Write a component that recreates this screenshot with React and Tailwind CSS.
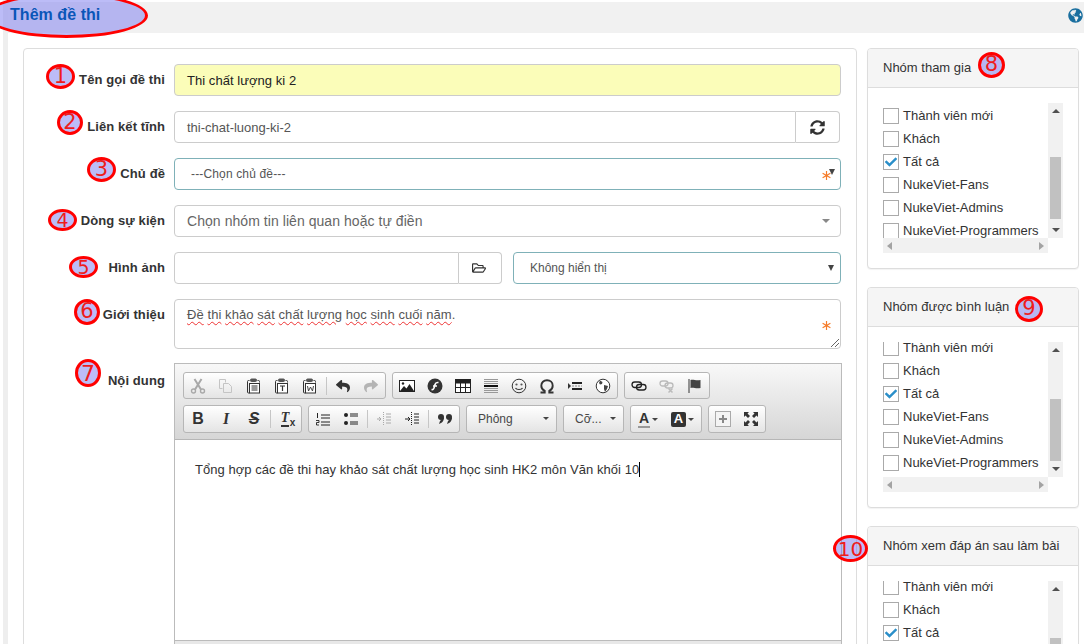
import React from "react";
import { FaSyncAlt, FaRegFolderOpen, FaGlobeAmericas, FaCheck, FaReply, FaShare } from "react-icons/fa";

const S = ({ children, c = "#333" }) => (
  <svg width="16" height="16" viewBox="0 0 16 16" fill="none" stroke={c} strokeWidth="1">{children}</svg>
);
const Clip = ({ children }) => (
  <S c="#333">
    <path d="M3.500 2.500H2.500a1 1 0 0 0-1 1v10.500a1 1 0 0 0 1 1h1M11.500 2.500h1a1 1 0 0 1 1 1v1" />
    <rect x="4.500" y="1" width="6" height="2.500" rx="1" fill="#555" stroke="#555" />
    <rect x="3.500" y="5.500" width="10" height="9.500" fill="#fff" />
    {children}
  </S>
);
const icons = {
  cut: (
    <S c="#a8a8a8"><circle cx="3.500" cy="13" r="2" strokeWidth="1.400" /><circle cx="12.500" cy="13" r="2" strokeWidth="1.400" /><path d="M5 11.500 11.500 1M11 11.500 4.500 1" strokeWidth="2" /></S>
  ),
  copy: (
    <S c="#c4c4c4"><path d="M1.500 1.500h6v3M1.500 1.500v9h3M5.500 5.500h5l3 3v6h-8z" /></S>
  ),
  paste: <Clip><path d="M5.500 8h6M5.500 10h6M5.500 12h6" /></Clip>,
  pasteT: <Clip><path d="M6 8h5M8.500 8v5" strokeWidth="1.200" /></Clip>,
  pasteW: <Clip><path d="M5.500 8l1 5 2-4 2 4 1-5" strokeWidth="0.900" /></Clip>,
  undo: <FaReply size={14} color="#333" />,
  redo: <FaShare size={14} color="#b4b4b4" />,
  image: (
    <S c="#222"><rect x="0.500" y="2.500" width="15" height="11" fill="#fff" /><path d="M1 13l4-5 2.500 2.500L10.500 6 15 13z" fill="#222" stroke="none" /><circle cx="4" cy="5.500" r="1.200" fill="#222" stroke="none" /></S>
  ),
  flash: (
    <svg width="16" height="16" viewBox="0 0 16 16"><circle cx="8" cy="8" r="7.500" fill="#333" /><path d="M4.500 11.500c2 .5 2.500-1 3-3l.5-2c.4-1.500 1.500-2.300 3.500-2M6 8h4" stroke="#fff" strokeWidth="1.600" fill="none" /></svg>
  ),
  table: (
    <S c="#222"><rect x="0.500" y="1.500" width="15" height="13" fill="#fff" /><rect x="0.500" y="1.500" width="15" height="3.500" fill="#222" /><path d="M5.500 5v9M10.500 5v9M1 9.500h14" /></S>
  ),
  hr: (
    <S c="#999"><path d="M1 1.500h14M1 3.500h14M1 5.500h14M1 10.500h14M1 12.500h14M1 14.500h14" /><path d="M1 8h14" stroke="#111" strokeWidth="2" /></S>
  ),
  smile: (
    <S c="#333"><circle cx="8" cy="8" r="6.800" /><circle cx="5.500" cy="6.500" r="1.100" fill="#555" stroke="none" /><circle cx="10.500" cy="6.500" r="1.100" fill="#555" stroke="none" /><path d="M4.500 10c1 2 6 2 7 0" strokeWidth="1.200" /></S>
  ),
  omega: (
    <S c="#333"><path d="M1.500 14.500h4.200v-1.600C3.700 11.900 2.300 10 2.300 7.700 2.300 4.400 4.700 2.300 8 2.300s5.700 2.100 5.700 5.400c0 2.300-1.400 4.200-3.400 5.200v1.600h4.200" strokeWidth="1.900" /></S>
  ),
  iframe: (
    <svg width="16" height="16" viewBox="0 0 16 16"><path d="M1 5v6l3-3z" fill="#333" /><path d="M5 4h10v2H5zM5 10h10v2H5z" fill="#222" /><path d="M5 8h10" stroke="#888" strokeDasharray="2 1" /></svg>
  ),
  globe: (
    <S c="#333"><circle cx="8" cy="8" r="6.800" fill="#fff" /><path d="M5 2.500 7.500 4 7 6 5 6.500 4 5zM9 7l4 1-1 3-2 3-1-3z" fill="#444" stroke="none" /></S>
  ),
  link: (
    <S c="#222"><rect x="1" y="4" width="9.500" height="5.500" rx="2.700" strokeWidth="1.300" /><rect x="5.500" y="6.500" width="9.500" height="5.500" rx="2.700" strokeWidth="1.300" /></S>
  ),
  unlink: (
    <S c="#bbb"><rect x="1" y="3" width="8" height="5" rx="2.500" strokeWidth="1.300" /><rect x="6" y="5" width="8" height="5" rx="2.500" strokeWidth="1.300" /><path d="M9.500 10.500l4 4M13.500 10.500l-4 4" strokeWidth="1.500" /></S>
  ),
  flag: (
    <svg width="16" height="16" viewBox="0 0 16 16"><path d="M2 1v14" stroke="#333" /><path d="M3.500 2c3-1 5 1 10 0v8c-5 1-7-1-10 0z" fill="#444" /></svg>
  ),
  ol: (
    <S c="#222"><path d="M6 4h9M6 7h9M6 11h9M6 14h9" strokeWidth="1" /><path d="M2.500 2v5" /><path d="M1 9.500h3v2H1.500v2.500H4" strokeWidth="0.900" /></S>
  ),
  ul: (
    <svg width="16" height="16" viewBox="0 0 16 16"><circle cx="3" cy="4" r="2" fill="#222" /><circle cx="3" cy="12" r="2" fill="#222" /><path d="M7 3h8M7 5h8M7 11h8M7 13h8" stroke="#222" /></svg>
  ),
  outdent: (
    <S c="#aaa"><path d="M7.500 1v14" strokeDasharray="1 1" /><path d="M10 3h5M10 6h5M10 9h5M10 12h5" /><path d="M1 8h4M3 6l2 2-2 2" /></S>
  ),
  indent: (
    <S c="#222"><path d="M7.500 1v14" strokeDasharray="1 1" /><path d="M10 3h5M10 6h5M10 9h5M10 12h5" /><path d="M1 8h5M4 6l2 2-2 2" /></S>
  ),
  quote: (
    <svg width="16" height="16" viewBox="0 0 16 16" fill="#333"><circle cx="4" cy="6" r="3" /><circle cx="12" cy="6" r="3" /><path d="M7 6c0 4-2 6-5 7l1-3zM15 6c0 4-2 6-5 7l1-3z" /></svg>
  ),
  blocks: (
    <svg width="16" height="16" viewBox="0 0 16 16"><rect x="0.500" y="0.500" width="15" height="15" fill="#f4f4f4" stroke="#aaa" /><path d="M8 4v8M4 8h8" stroke="#888" strokeWidth="2" /></svg>
  ),
  max: (
    <svg width="16" height="16" viewBox="0 0 16 16" fill="#333"><path d="M1 1h5L4.500 2.500 7 5 5 7 2.500 4.500 1 6zM15 1v5l-1.500-1.500L11 7 9 5l2.500-2.500L10 1zM1 15v-5l1.500 1.500L5 9l2 2-2.500 2.500L6 15zM15 15h-5l1.500-1.500L9 11l2-2 2.500 2.500L15 10z" /></svg>
  ),
};

const Btn = ({ name, children }) => (
  <span className="flex h-full w-[28px] items-center justify-center">{children || icons[name]}</span>
);
const Sep = () => (
  <span className="flex h-full w-[5px] items-center justify-center"><span className="h-[18px] w-px bg-[#c6c6c6]" /></span>
);
const Grp = ({ children, cls = "" }) => (
  <div className={"flex h-full items-center rounded-[3px] border border-[#b6b6b6] bg-gradient-to-b from-white to-[#e4e4e4] " + cls}>{children}</div>
);
const Caret = () => <span className="border-x-[3px] border-t-[3px] border-x-transparent border-t-[#444]" />;
const Combo = ({ label, cls }) => (
  <div className={"flex h-full items-center justify-between rounded-[3px] border border-[#b6b6b6] bg-gradient-to-b from-white to-[#e4e4e4] pr-[7px] pb-[1px] pl-[11px] text-[12px] text-[#484848] " + cls}>
    <span>{label}</span>
    <Caret />
  </div>
);

const Toolbar = () => (
  <div className="flex h-[76px] flex-col gap-[6px] border-b border-[#b6b6b6] bg-gradient-to-b from-[#f8f8f8] to-[#d6d6d6] px-[8px] pt-[8px]">
    <div className="flex h-[27px] gap-[6px]">
      <Grp>
        <Btn name="cut" /><Btn name="copy" /><Btn name="paste" /><Btn name="pasteT" /><Btn name="pasteW" /><Sep /><Btn name="undo" /><Btn name="redo" />
      </Grp>
      <Grp>
        <Btn name="image" /><Btn name="flash" /><Btn name="table" /><Btn name="hr" /><Btn name="smile" /><Btn name="omega" /><Btn name="iframe" /><Btn name="globe" />
      </Grp>
      <Grp>
        <Btn name="link" /><Btn name="unlink" /><Btn name="flag" />
      </Grp>
    </div>
    <div className="flex h-[28px] gap-[6px]">
      <Grp>
        <Btn><b className="font-['Liberation_Sans'] text-[16px] text-[#333]">B</b></Btn>
        <Btn><b className="font-['Liberation_Serif'] text-[16px] italic text-[#333]">I</b></Btn>
        <Btn><b className="font-['Liberation_Sans'] text-[16px] text-[#333] italic line-through">S</b></Btn>
        <Sep />
        <Btn>
          <span className="relative mr-[4px] border-b-2 border-[#333] font-['Liberation_Serif'] text-[14px] leading-[14px] font-bold text-[#333] italic">
            T
            <span className="absolute top-[5px] left-[9px] font-['Liberation_Sans'] text-[10px] not-italic">x</span>
          </span>
        </Btn>
      </Grp>
      <Grp>
        <Btn name="ol" /><Btn name="ul" /><Sep /><Btn name="outdent" /><Btn name="indent" /><Sep /><Btn name="quote" />
      </Grp>
      <Combo label="Phông" cls="w-[91px]" />
      <Combo label="Cỡ..." cls="w-[61px]" />
      <Grp cls="w-[72px] px-[7px] justify-between">
        <span className="flex items-center gap-[2px]">
          <span className="border-b-[2px] border-[#999] px-[1px] font-['Liberation_Sans'] text-[14px] leading-[15px] font-bold text-[#333]">A</span>
          <Caret />
        </span>
        <span className="flex items-center gap-[2px]">
          <span className="flex h-[15px] w-[15px] items-center justify-center rounded-[2px] bg-[#333] font-['Liberation_Sans'] text-[13px] font-bold text-white">A</span>
          <Caret />
        </span>
      </Grp>
      <Grp>
        <Btn name="blocks" /><Btn name="max" />
      </Grp>
    </div>
  </div>
);

const Label = ({ children }) => (
  <label className="w-[141px] shrink-0 pt-[7px] text-right text-[13px] leading-[18px] font-bold tracking-[0.1px] text-[#333]">{children}</label>
);
const Row = ({ label, children }) => (
  <div className="flex gap-[9px]">
    <Label>{label}</Label>
    <div className="min-w-0 flex-1">{children}</div>
  </div>
);
const Star = ({ cls }) => (
  <svg width="9" height="9" viewBox="0 0 9 9" stroke="#f57c2a" strokeWidth="1.200" className={"absolute " + cls}>
    <path d="M4.500 0v9M0.600 2.200l7.800 4.600M8.400 2.200 0.600 6.800" />
  </svg>
);
const Arrow = () => <span className="border-x-[3.500px] border-t-[6px] border-x-transparent border-t-[#444]" />;

const Check = ({ on, label }) => (
  <div className="flex h-[23px] shrink-0 items-center gap-[4px] text-[13px] whitespace-nowrap text-[#333]">
    <span className="flex h-[16px] w-[16px] shrink-0 items-center justify-center border border-[#aaa] bg-white">
      {on && <FaCheck size={12} color="#2b8fc9" />}
    </span>
    <span>{label}</span>
  </div>
);

const Side = ({ title, off, thumb }) => (
  <div className="overflow-hidden rounded-[4px] border border-[#ddd] bg-white shadow-[0_1px_1px_rgba(0,0,0,0.05)]">
    <div className="flex h-[39px] items-center border-b border-[#ddd] bg-[#f5f5f5] px-[15px] text-[13px] text-[#333]">{title}</div>
    <div className="h-[180px] px-[15px] pt-[15px]">
      <div className="flex h-[150px]">
        <div className="flex w-[165px] flex-col">
          <div className="h-[135px] overflow-hidden">
            <div className={"flex flex-col " + off}>
              <Check label="Thành viên mới" />
              <Check label="Khách" />
              <Check on label="Tất cả" />
              <Check label="NukeViet-Fans" />
              <Check label="NukeViet-Admins" />
              <Check label="NukeViet-Programmers" />
            </div>
          </div>
          <div className="flex h-[15px] items-center justify-between bg-[#f1f1f1] px-[4px]">
            <span className="border-y-[4px] border-r-[5px] border-y-transparent border-r-[#a3a3a3]" />
            <span className="border-y-[4px] border-l-[5px] border-y-transparent border-l-[#a3a3a3]" />
          </div>
        </div>
        <div className="flex h-[135px] w-[15px] flex-col items-center bg-[#f1f1f1]">
          <span className="mt-[6px] mb-[-10px] border-x-[4px] border-b-[4px] border-x-transparent border-b-[#505050]" />
          <div className={"h-[62px] w-[11px] shrink-0 bg-[#c1c1c1] " + thumb} />
          <span className="mt-auto mb-[6px] border-x-[4px] border-t-[4px] border-x-transparent border-t-[#505050]" />
        </div>
      </div>
    </div>
  </div>
);

const Mark = ({ n, cls }) => (
  <div className={"absolute flex items-center justify-center rounded-[50%] border-[3px] border-[#f00] bg-[#7a7af0]/50 font-['DejaVu_Sans'] text-[#ee1c1c] " + cls}>{n}</div>
);

const Wavy = ({ children }) => (
  <span className="underline decoration-[#e33] decoration-wavy decoration-[1px] underline-offset-2">{children}</span>
);

const intro = ["Đề", "thi", "khảo", "sát", "chất", "lượng", "học", "sinh", "cuối", "năm"];

export default function App() {
  return (
    <div className="relative h-[644px] overflow-hidden bg-white pl-[3px] font-['Liberation_Sans',sans-serif] text-[13px]">
      <div className="h-full border-l-[5px] border-[#eee] pt-[2px]">
        <div className="flex h-[31px] items-center justify-between bg-[#f1f1f1] pb-[5px] pl-[2px]">
          <h1 className="relative z-10 text-[16px] font-bold tracking-[0.05px] text-[#0a56b8]">Thêm đề thi</h1>
          <FaGlobeAmericas size={15} color="#1a6f9f" className="mr-[1px]" />
        </div>
        <div className="flex gap-[10px] pt-[15px] pl-[15px]">
          <div className="h-[700px] w-[834px] shrink-0 rounded-[4px] border border-[#ddd] bg-white pt-[15px] pr-[15px]">
            <div className="flex flex-col gap-[15px]">
              <Row label="Tên gọi đề thi">
                <div className="flex h-[32px] items-center rounded-[4px] border border-[#ccc] bg-[#fbfdb9] px-[12px] pt-[1px] tracking-[0.05px] text-[#222]">Thi chất lượng ki 2</div>
              </Row>
              <Row label="Liên kết tĩnh">
                <div className="flex h-[32px] w-[666px]">
                  <div className="flex flex-1 items-center rounded-l-[4px] border border-[#ccc] px-[12px] pt-[1px] text-[#555]">thi-chat-luong-ki-2</div>
                  <div className="flex w-[44px] items-center justify-center rounded-r-[4px] border border-l-0 border-[#ccc]">
                    <FaSyncAlt size={15} color="#333" />
                  </div>
                </div>
              </Row>
              <Row label="Chủ đề">
                <div className="relative flex h-[32px] items-center rounded-[4px] border border-[#7fb1b8] pr-[5px] pl-[16px] text-[12px] tracking-[0.15px] text-[#555]">
                  <span className="flex-1">---Chọn chủ đề---</span>
                  <Star cls="top-[12px] right-[9px]" />
                  <span className="mb-[4px] border-x-[3.500px] border-t-[6px] border-x-transparent border-t-[#444]" />
                </div>
              </Row>
              <Row label="Dòng sự kiện">
                <div className="flex h-[32px] items-center justify-between rounded-[4px] border border-[#ccc] pt-[1px] pr-[10px] pl-[12px] text-[14px] tracking-[0.055px] text-[#666]">
                  <span>Chọn nhóm tin liên quan hoặc tự điền</span>
                  <span className="mb-[1px] border-x-[4px] border-t-[4px] border-x-transparent border-t-[#888]" />
                </div>
              </Row>
              <Row label="Hình ảnh">
                <div className="flex h-[32px] gap-[11px]">
                  <div className="flex w-[328px]">
                    <div className="flex-1 rounded-l-[4px] border border-[#ccc]" />
                    <div className="flex w-[43px] items-center justify-center rounded-r-[4px] border border-l-0 border-[#ccc]">
                      <FaRegFolderOpen size={14} color="#333" className="mr-[3px]" />
                    </div>
                  </div>
                  <div className="flex flex-1 items-center justify-between rounded-[4px] border border-[#7fb1b8] pr-[6px] pl-[16px] text-[12px] text-[#555]">
                    <span>Không hiển thị</span>
                    <Arrow />
                  </div>
                </div>
              </Row>
              <Row label="Giới thiệu">
                <div className="relative h-[50px] rounded-[4px] border border-[#ccc] px-[12px] pt-[5px] tracking-[0.07px] text-[#555]">
                  {intro.map((w, i) => (
                    <React.Fragment key={w}>
                      {i > 0 && " "}
                      <Wavy>{w}</Wavy>
                    </React.Fragment>
                  ))}
                  .
                  <Star cls="top-[21px] right-[9px]" />
                  <svg width="10" height="10" viewBox="0 0 10 10" className="absolute right-0 bottom-0" stroke="#666" fill="none">
                    <path d="M1 9 9 1M5 9l4-4" />
                  </svg>
                </div>
              </Row>
              <div className="-mt-[1px]">
                <Row label={<span className="relative top-[2px]">Nội dung</span>}>
                  <div className="w-[668px] border border-[#bbb]">
                    <Toolbar />
                    <div className="h-[200px] px-[20px] pt-[19px] text-[13px] leading-[20px] tracking-[0.04px] text-[#333]">
                      Tổng hợp các đề thi hay khảo sát chất lượng học sinh HK2 môn Văn khối 10
                      <span className="inline-block h-[15px] w-px translate-y-[3px] bg-black" />
                    </div>
                    <div className="h-[30px] border-t border-[#bbb] bg-[#e8e8e8]" />
                  </div>
                </Row>
              </div>
            </div>
          </div>
          <div className="flex w-[212px] shrink-0 flex-col gap-[18px]">
            <Side title="Nhóm tham gia" off="pt-[1px]" thumb="mt-[54px]" />
            <Side title="Nhóm được bình luận" off="-mt-[6px]" thumb="mt-[57px]" />
            <Side title="Nhóm xem đáp án sau làm bài" off="-mt-[6px]" thumb="mt-[57px]" />
          </div>
        </div>
      </div>

      <Mark n="" cls="left-[-15px] top-[-7px] w-[163px] h-[45px]" />
      <Mark n="1" cls="left-[46px] top-[64px] w-[29px] h-[25px] text-[21px]" />
      <Mark n="2" cls="left-[57px] top-[110px] w-[26px] h-[25px] text-[21px]" />
      <Mark n="3" cls="left-[87px] top-[157px] w-[29px] h-[25px] text-[21px]" />
      <Mark n="4" cls="left-[48px] top-[209px] w-[29px] h-[22px] text-[19px]" />
      <Mark n="5" cls="left-[69px] top-[256px] w-[29px] h-[22px] text-[19px]" />
      <Mark n="6" cls="left-[74px] top-[299px] w-[26px] h-[26px] text-[21px]" />
      <Mark n="7" cls="left-[75px] top-[359px] w-[26px] h-[28px] text-[22px]" />
      <Mark n="8" cls="left-[978px] top-[52px] w-[27px] h-[26px] text-[21px]" />
      <Mark n="9" cls="left-[1015px] top-[296px] w-[28px] h-[26px] text-[21px]" />
      <Mark n="10" cls="left-[833px] top-[535px] w-[35px] h-[27px] text-[20px]" />
    </div>
  );
}
